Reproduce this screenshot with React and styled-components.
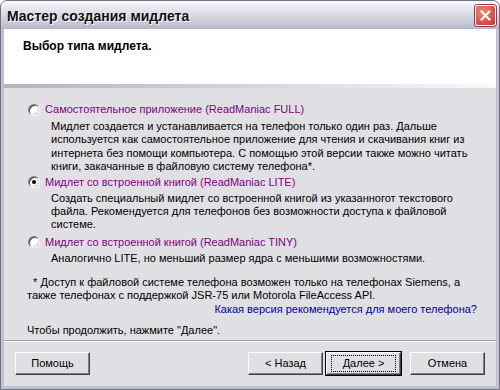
import React from 'react';
import styled, { createGlobalStyle } from 'styled-components';

const GlobalStyle = createGlobalStyle`
  html, body {
    margin: 0;
    padding: 0;
    background: #fff;
  }
  body {
    font-family: "Liberation Sans", Arial, sans-serif;
    font-size: 11px;
    color: #000;
  }
`;

const Window = styled.div`
  width: 500px;
  height: 390px;
  box-sizing: border-box;
  display: flex;
  flex-direction: column;
  background: #c2c2ce;
  border: 1px solid #6f6f86;
  border-radius: 7px 7px 0 0;
  overflow: hidden;
`;

const TitleBar = styled.div`
  height: 28px;
  flex: none;
  display: flex;
  align-items: center;
  justify-content: space-between;
  padding: 0 3px 0 6px;
  background: linear-gradient(#fdfdfe 0%, #ececf2 18%, #dcdce6 45%, #cacad8 75%, #b6b6c8 100%);
`;

const Title = styled.div`
  font-family: "Liberation Sans", Arial, sans-serif;
  font-weight: bold;
  font-size: 14px;
  color: #111;
  text-shadow: 1px 1px 0 #fff;
  padding-top: 1px;
`;

const CloseButton = styled.div`
  width: 19px;
  height: 19px;
  border: 1px solid #fff;
  border-radius: 3px;
  background: radial-gradient(circle at 35% 30%, #f08a80 0%, #d8584f 55%, #b8363a 100%);
  box-shadow: 0 0 0 1px #9a3b44;
  display: flex;
  align-items: center;
  justify-content: center;
`;

const Client = styled.div`
  flex: 1;
  margin: 0 3px 3px 3px;
  display: flex;
  flex-direction: column;
  background: #e0dfe3;
`;

const Header = styled.div`
  height: 55px;
  flex: none;
  background: #fff;
  padding: 10px 0 0 19px;
  box-sizing: border-box;
  font-weight: bold;
  font-size: 12px;
`;

const HeaderRule = styled.div`
  height: 4px;
  flex: none;
  background: linear-gradient(to right, #b4b4c0, #d4d4dc 50%, #fafafb);
`;

const Body = styled.div`
  flex: 1;
  display: flex;
  flex-direction: column;
  padding: 15px 0 0 24px;
`;

const Option = styled.div`
  display: flex;
  flex-direction: column;
  margin-bottom: ${p => p.$gap}px;
`;

const OptionLabel = styled.label`
  display: flex;
  align-items: center;
  gap: 5px;
  line-height: 13px;
  color: #800080;
`;

const Radio = styled.span`
  width: 12px;
  height: 12px;
  box-sizing: border-box;
  border-radius: 50%;
  background: #fff;
  border: 1px solid;
  border-color: #808080 #f4f4f4 #f4f4f4 #808080;
  box-shadow: inset 1px 1px 0 #404040, inset -1px -1px 0 #d4d0c8;
  display: flex;
  align-items: center;
  justify-content: center;

  &::after {
    content: '';
    width: 4px;
    height: 4px;
    border-radius: 50%;
    background: ${p => (p.$checked ? '#000' : 'transparent')};
  }
`;

const Description = styled.div`
  margin: ${p => p.$top || 3}px 0 0 23px;
  line-height: 13.4px;
  white-space: nowrap;
`;

const Note = styled.div`
  margin: 11px 0 0 -1px;
  line-height: 13px;
  white-space: nowrap;
`;

const LinkRow = styled.div`
  display: flex;
  justify-content: flex-end;
  padding-right: 19px;
  margin-top: 1px;
  line-height: 13px;
`;

const HelpLink = styled.span`
  color: #0000a0;
  cursor: pointer;
`;

const Continue = styled.div`
  margin: 8px 0 0 -1px;
  line-height: 13px;
`;

const Separator = styled.div`
  height: 1px;
  flex: none;
  background: #a0a0a8;
  border-bottom: 1px solid #fff;
`;

const ButtonRow = styled.div`
  height: 44px;
  flex: none;
  display: flex;
  align-items: center;
  padding: 0 11px 2px;
  box-sizing: border-box;
`;

const Spacer = styled.div`
  flex: 1;
`;

const Button = styled.button`
  width: 75px;
  height: 23px;
  box-sizing: border-box;
  margin-left: ${p => p.$gap || 0}px;
  font-family: "Liberation Sans", Arial, sans-serif;
  font-size: 11px;
  color: #000;
  background: #e0dfe3;
  border: 1px solid;
  border-color: #fff #404040 #404040 #fff;
  box-shadow: inset -1px -1px 0 #808080;
  padding: 0;
  display: flex;
  align-items: center;
  justify-content: center;
  outline: ${p => (p.$default ? '1px solid #000' : 'none')};
  outline-offset: 0;
`;

const Focus = styled.span`
  display: flex;
  align-items: center;
  justify-content: center;
  width: 63px;
  height: 15px;
  border: 1px dotted #000;
`;

export default function App() {
  return (
    <>
      <GlobalStyle />
      <Window>
        <TitleBar>
          <Title>Мастер создания мидлета</Title>
          <CloseButton>
            <svg width="11" height="11" viewBox="0 0 11 11">
              <path d="M1.5 1.5 L9.5 9.5 M9.5 1.5 L1.5 9.5" stroke="#fff" strokeWidth="2" strokeLinecap="square" />
            </svg>
          </CloseButton>
        </TitleBar>
        <Client>
          <Header>Выбор типа мидлета.</Header>
          <HeaderRule />
          <Body>
            <Option $gap={2}>
              <OptionLabel><Radio />Самостоятельное приложение (ReadManiac FULL)</OptionLabel>
              <Description $top={4}>
                Мидлет создается и устанавливается на телефон только один раз. Дальше<br />
                используется как самостоятельное приложение для чтения и скачивания книг из<br />
                интернета без помощи компьютера. С помощью этой версии также можно читать<br />
                книги, закачанные в файловую систему телефона*.
              </Description>
            </Option>
            <Option $gap={4}>
              <OptionLabel><Radio $checked />Мидлет со встроенной книгой (ReadManiac LITE)</OptionLabel>
              <Description>
                Создать специальный мидлет со встроенной книгой из указанногот текстового<br />
                файла. Рекомендуется для телефонов без возможности доступа к файловой<br />
                системе.
              </Description>
            </Option>
            <Option $gap={0}>
              <OptionLabel><Radio />Мидлет со встроенной книгой (ReadManiac TINY)</OptionLabel>
              <Description>
                Аналогично LITE, но меньший размер ядра с меньшими возможностями.
              </Description>
            </Option>
            <Note>
              &nbsp;&nbsp;* Доступ к файловой системе телефона возможен только на телефонах Siemens, а<br />
              также телефонах с поддержкой JSR-75 или Motorola FileAccess API.
            </Note>
            <LinkRow>
              <HelpLink>Какая версия рекомендуется для моего телефона?</HelpLink>
            </LinkRow>
            <Continue>Чтобы продолжить, нажмите "Далее".</Continue>
          </Body>
          <Separator />
          <ButtonRow>
            <Button>Помощь</Button>
            <Spacer />
            <Button>&lt; Назад</Button>
            <Button $gap={3} $default>
              <Focus>Далее &gt;</Focus>
            </Button>
            <Button $gap={9}>Отмена</Button>
          </ButtonRow>
        </Client>
      </Window>
    </>
  );
}
